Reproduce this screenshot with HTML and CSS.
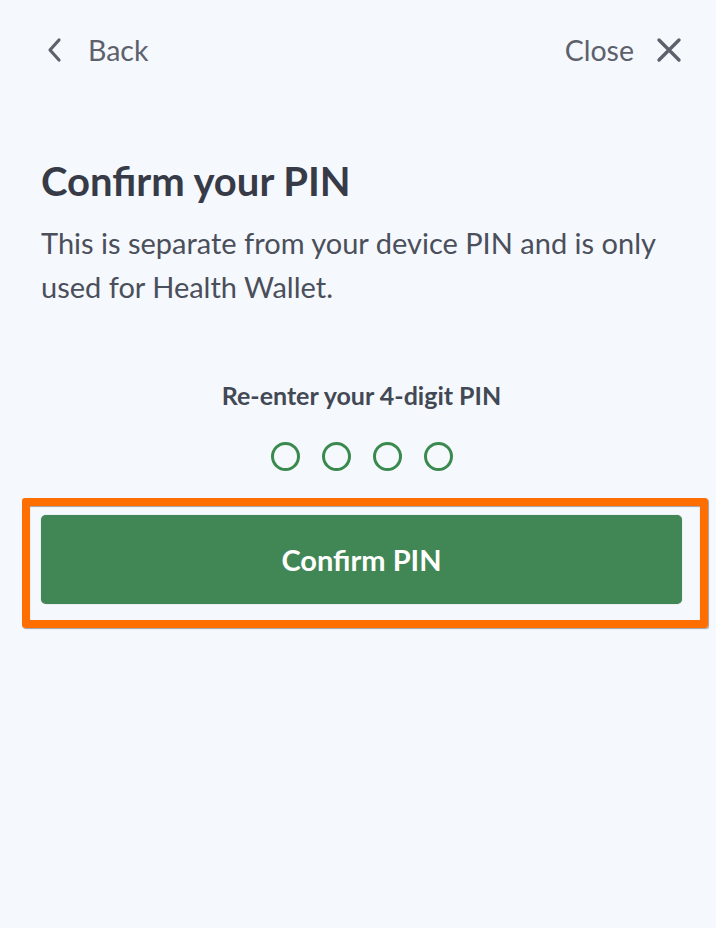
FILE: index.html
```html
<!DOCTYPE html>
<html lang="en">
<head>
<meta charset="utf-8">
<link rel="stylesheet" href="styles.css">
</head>
<body>
<div class="screen">
  <header class="topbar">
    <a class="nav back">
      <svg class="icon" width="18" height="26" viewBox="0 0 18 26"><path d="M14 3 L5 13 L14 23" fill="none" stroke="#5d616c" stroke-width="3.2" stroke-linecap="round" stroke-linejoin="round"/></svg>
      <span>Back</span>
    </a>
    <a class="nav close">
      <span>Close</span>
      <svg class="icon" width="26" height="26" viewBox="0 0 26 26"><path d="M3 3 L23 23 M23 3 L3 23" fill="none" stroke="#5d616c" stroke-width="3.4" stroke-linecap="round"/></svg>
    </a>
  </header>
  <main class="content">
    <h1 class="title">Confirm your PIN</h1>
    <p class="desc">This is separate from your device PIN and is only used for Health Wallet.</p>
    <div class="pin">
      <p class="pin-label">Re-enter your 4-digit PIN</p>
      <div class="dots">
        <span class="dot"></span><span class="dot"></span><span class="dot"></span><span class="dot"></span>
      </div>
    </div>
    <div class="action">
      <button class="btn">Confirm PIN</button>
      <div class="highlight"></div>
    </div>
  </main>
</div>
</body>
</html>
```
FILE: styles.css
```css
* { box-sizing: border-box; }
html, body { margin: 0; padding: 0; }
body {
  background: #f5f8fc;
  font-family: Lato, "Noto Sans", sans-serif;
  width: 716px;
  height: 928px;
}
.screen { padding: 0 34px 0 41px; }
.topbar {
  display: flex;
  justify-content: space-between;
  align-items: center;
  height: 100px;
}
.nav {
  display: flex;
  align-items: center;
  color: #5d616c;
  font-size: 28.5px;
}
.nav.back { gap: 25px; margin-left: 4px; }
.nav.close { gap: 22px; }
.icon { display: block; }
.content { padding-top: 57px; }
.title {
  margin: 0;
  font-size: 40px;
  font-weight: 700;
  color: #363b47;
  line-height: 48px;
}
.desc {
  margin: 16px 0 0;
  font-size: 29px;
  line-height: 44px;
  color: #4a4f5b;
  width: 636px;
}
.pin {
  display: flex;
  flex-direction: column;
  align-items: center;
  margin-top: 71px;
}
.pin-label {
  margin: 0;
  font-size: 25px;
  font-weight: 700;
  color: #434855;
  line-height: 30px;
}
.dots {
  display: flex;
  gap: 22px;
  margin-top: 32px;
}
.dot {
  width: 29px;
  height: 29px;
  border: 3px solid #3a8a4f;
  border-radius: 50%;
}
.action {
  position: relative;
  margin-top: 44px;
}
.btn {
  display: block;
  width: 641px;
  height: 89px;
  border: none;
  border-radius: 5px;
  background: #418755;
  color: #fff;
  font-family: Lato, "Noto Sans", sans-serif;
  font-size: 29px;
  font-weight: 700;
  box-shadow: 0 0 1px rgba(0,0,0,0.4);
}
.highlight {
  position: absolute;
  left: -19px;
  top: -17px;
  width: 686px;
  height: 130px;
  border: 8px solid #ff6e00;
  border-radius: 3px;
  box-shadow: inset 0 1px 1px rgba(0,0,0,0.35), 1px 1px 1px rgba(0,0,0,0.35);
  pointer-events: none;
}
```
